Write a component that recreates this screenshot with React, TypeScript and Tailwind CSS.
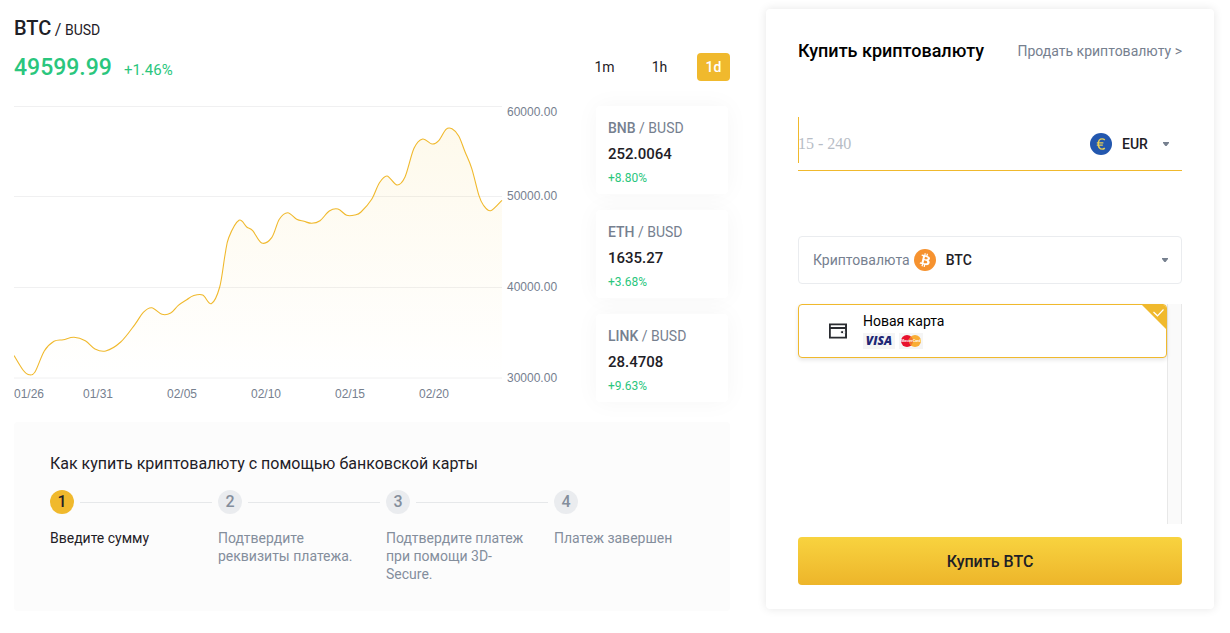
import React from "react";

type Point = [number, number];

const PRICES: Point[] = [
  [0, 249.5], [9, 264], [15, 268.7], [21, 266], [30.3, 245], [40, 235.3], [49.3, 233.7], [60, 231.3],
  [71.3, 234.7], [81, 243], [91.7, 245], [106.7, 236], [121, 218.3],
  [129.3, 206.3], [137.7, 201.7], [148, 208.3], [156.7, 207], [164.3, 199.3],
  [172.7, 193.7], [179.3, 189.7], [188.7, 189], [197.3, 197.7],
  [205.7, 181], [211, 149], [214.7, 131.7], [225, 114.3],
  [232.7, 121], [238.7, 124.7], [247.7, 137], [257.7, 131.7],
  [265.3, 113.3], [273.7, 106.7], [282.7, 113.3], [290, 115.3],
  [297.7, 117.3], [306, 114.7], [315.3, 105], [324, 103], [332.7, 109.3], [341, 109],
  [347, 106], [357.7, 93.3], [365.3, 77], [373, 70], [383, 79], [391, 71],
  [400, 42.3], [408.7, 33], [418, 38], [425, 34.3],
  [432, 23.3], [438, 22.8], [444.7, 30], [451, 45.7], [457.7, 62.3],
  [465, 89.7], [469.3, 99], [476.7, 104.7], [488, 94.3],
];

function smoothPath(points: Point[]): string {
  let d = `M${points[0][0]} ${points[0][1]}`;
  for (let i = 0; i < points.length - 1; i++) {
    const a = points[i - 1] ?? points[i];
    const b = points[i];
    const c = points[i + 1];
    const e = points[i + 2] ?? c;
    d += `C${b[0] + (c[0] - a[0]) / 6} ${b[1] + (c[1] - a[1]) / 6} ${c[0] - (e[0] - b[0]) / 6} ${
      c[1] - (e[1] - b[1]) / 6
    } ${c[0]} ${c[1]}`;
  }
  return d;
}

const LINE = smoothPath(PRICES);

const Y_TICKS = [
  { label: "60000.00", line: 0.5, text: 10 },
  { label: "50000.00", line: 90.5, text: 94 },
  { label: "40000.00", line: 181.5, text: 185 },
  { label: "30000.00", line: 272, text: 276 },
];

const X_TICKS = [
  { label: "01/26", x: 0 },
  { label: "01/31", x: 69 },
  { label: "02/05", x: 153 },
  { label: "02/10", x: 237 },
  { label: "02/15", x: 321 },
  { label: "02/20", x: 405 },
];

function PriceChart() {
  return (
    <svg viewBox="0 0 546 296" className="block h-auto w-full" role="img" aria-label="BTC / BUSD">
      <defs>
        <linearGradient id="area" x1="0" y1="0" x2="0" y2="1">
          <stop offset="0" stopColor="#f0b90b" stopOpacity="0.08" />
          <stop offset="1" stopColor="#f0b90b" stopOpacity="0" />
        </linearGradient>
      </defs>
      {Y_TICKS.map((t) => (
        <line key={t.label} x1="0" x2="488" y1={t.line} y2={t.line} stroke="#f0f0f1" />
      ))}
      <path d={`${LINE}L488 272L0 272Z`} fill="url(#area)" />
      <path d={LINE} fill="none" stroke="#f0b92d" strokeWidth="1.1" />
      <g className="fill-[#76808f] font-['Liberation_Sans',sans-serif] text-[12px]">
        {Y_TICKS.map((t) => (
          <text key={t.label} x="493" y={t.text}>{t.label}</text>
        ))}
        {X_TICKS.map((t) => (
          <text key={t.label} x={t.x} y="292">{t.label}</text>
        ))}
      </g>
    </svg>
  );
}

const PAIRS = [
  { base: "BNB", price: "252.0064", change: "+8.80%" },
  { base: "ETH", price: "1635.27", change: "+3.68%" },
  { base: "LINK", price: "28.4708", change: "+9.63%" },
];

function PairCard({ base, price, change }: { base: string; price: string; change: string }) {
  return (
    <article className="h-22 rounded bg-white px-3 pt-3 shadow-[0_0_24px_rgba(0,0,0,0.04)]">
      <h3 className="text-sm leading-5 text-[#76808f]">
        <span className="font-medium">{base}</span> / BUSD
      </h3>
      <p className="mt-1 text-[15px] leading-6 font-medium text-[#1e2026]">{price}</p>
      <p className="mt-1 text-xs leading-4 text-[#2ac67d]">{change}</p>
    </article>
  );
}

const STEPS = ["Введите сумму", "Подтвердите реквизиты платежа.", "Подтвердите платеж при помощи 3D-Secure.", "Платеж завершен"];

function Steps() {
  return (
    <section className="mt-5 min-h-[189px] rounded bg-[#fcfcfc] px-9 pt-7 text-[#1e2026]">
      <h2 className="pt-0.5 text-base leading-6">Как купить криптовалюту с помощью банковской карты</h2>
      <ol className="mt-3.5 grid grid-cols-[repeat(3,168px)_1fr]">
        {STEPS.map((text, i) => (
          <li key={text}>
            <div className="flex items-center gap-1.5 pr-1.5">
              <span
                className={
                  i === 0
                    ? "grid size-6 shrink-0 place-items-center rounded-full bg-[#f0b92d] text-base font-medium"
                    : "grid size-6 shrink-0 place-items-center rounded-full bg-[#eaecef] text-base font-medium text-[#848e9c]"
                }
              >
                {i + 1}
              </span>
              {i < 3 && <span className="h-px flex-1 bg-[#e6e8ea]" />}
            </div>
            <p className={i === 0 ? "mt-[15px] text-sm leading-[18px]" : "mt-[15px] w-[140px] text-sm leading-[18px] text-[#848e9c]"}>
              {text}
            </p>
          </li>
        ))}
      </ol>
    </section>
  );
}

function Caret() {
  return (
    <svg viewBox="0 0 6 4" className="h-1 w-1.5 fill-[#76808f]" aria-hidden="true">
      <path d="M0 0h6v1L3.6 4H2.4L0 1z" />
    </svg>
  );
}

function EuroIcon() {
  return (
    <svg viewBox="0 0 22 22" className="size-[22px] shrink-0" aria-hidden="true">
      <circle cx="11" cy="11" r="11" fill="#2357ae" />
      <path
        d="M14.8 6.9c-.8-.7-1.7-1-2.6-1-2.4 0-3.9 2.2-3.9 5.1s1.5 5.1 3.9 5.1c.9 0 1.8-.3 2.6-1M6.8 9.9h6.6M6.8 12.1h6"
        fill="none"
        stroke="#e9cf55"
        strokeWidth="1.4"
      />
    </svg>
  );
}

function BitcoinIcon() {
  return (
    <svg viewBox="0 0 32 32" className="size-[22px] shrink-0" aria-hidden="true">
      <circle cx="16" cy="16" r="16" fill="#f6922f" />
      <path
        fill="#fff"
        d="M23.2 14c.3-2.1-1.3-3.3-3.5-4l.7-2.9-1.7-.4-.7 2.8-1.4-.3.7-2.8-1.7-.5-.7 2.9-1.1-.3-2.4-.6-.5 1.9 1.3.3c.7.2.8.6.8 1l-2 8c-.1.2-.3.5-.8.4l-1.3-.3-.8 2 2.2.5 1.3.3-.8 2.9 1.8.5.7-2.9 1.3.4-.7 2.8 1.8.5.7-2.9c3 .5 5.2.3 6.1-2.4.8-2.2 0-3.4-1.5-4.2 1.1-.3 1.9-1 2.2-2.7zm-4 5.6c-.5 2.1-4.2 1-5.3.7l.9-3.8c1.2.3 5 .9 4.4 3.1zm.6-5.7c-.5 1.9-3.6 1-4.6.7l.9-3.4c1 .2 4.2.7 3.7 2.7z"
      />
    </svg>
  );
}

function WalletIcon() {
  return (
    <svg viewBox="0 0 18 16" className="h-4 w-[18px]" aria-hidden="true">
      <path d="M.9 1.4h16.2v13.2H.9zM1 5h16" fill="none" stroke="#2a2c31" strokeWidth="1.8" />
      <path d="M17 8.2h-4.600l-1 1 1 1H17" fill="#fff" stroke="#c3c5c9" strokeWidth=".6" />
      <path d="M12.200 8.300h1.800v1.800h-1.800z" fill="#1e2026" />
      <path d="M17.100 1v14" stroke="#2a2c31" strokeWidth="1.8" />
    </svg>
  );
}

function VisaMark() {
  return (
    <span className="grid h-4 w-8 place-items-center bg-[#f5f5f5] font-['Open_Sans','Noto_Sans',sans-serif] text-[12px] leading-4 font-extrabold text-[#1f2775] italic">
      VISA
    </span>
  );
}

function MastercardMark() {
  return (
    <svg viewBox="0 0 24 16" className="h-4 w-6" role="img" aria-label="MasterCard">
      <rect width="24" height="16" fill="#f5f5f5" />
      <circle cx="8" cy="8" r="6" fill="#e8112d" />
      <circle cx="16" cy="8" r="6" fill="#f9ad35" />
      <path d="M12 3.500a6 6 0 0 1 0 9a6 6 0 0 1 0-9z" fill="#f2762e" />
      <text x="12" y="9.4" textAnchor="middle" fontSize="3.500" fontWeight="700" fill="#fff" fontFamily="Liberation Sans, sans-serif">
        MasterCard
      </text>
    </svg>
  );
}

function BuyCard() {
  return (
    <form
      onSubmit={(e) => e.preventDefault()}
      className="flex min-h-[600px] w-[448px] shrink-0 flex-col rounded bg-white px-8 pt-[26px] pb-6 shadow-[0_0_10px_rgba(0,0,0,0.1)]"
    >
      <header className="flex h-8 items-center justify-between">
        <h2 className="text-lg font-medium text-black">Купить криптовалюту</h2>
        <a href="#sell" className="text-sm text-[#76808f]">Продать криптовалюту &gt;</a>
      </header>

      <div className="mt-[50px] flex h-[54px] items-start border-b border-[#f0b92d]">
        <input
          aria-label="Сумма"
          placeholder="15 - 240"
          className="h-[46px] min-w-0 flex-1 bg-[linear-gradient(#f0b92d,#f0b92d)] bg-[length:1px_100%] bg-no-repeat pt-2 font-['Liberation_Serif',serif] text-base outline-none placeholder:text-[#b7bdc6]"
        />
        <div className="mt-4 flex h-[22px] items-center pr-[13px]">
          <EuroIcon />
          <select
            aria-label="Валюта"
            className="ml-2.5 w-[41px] appearance-none bg-transparent text-sm font-medium text-[#1e2026] outline-none"
          >
            <option>EUR</option>
          </select>
          <Caret />
        </div>
      </div>

      <div className="mt-[65px] flex h-12 items-center rounded border border-[#eaecef] pr-[13px] pl-3.5">
        <label htmlFor="coin" className="text-sm text-[#76808f]">Криптовалюта</label>
        <span className="ml-1 flex"><BitcoinIcon /></span>
        <select
          id="coin"
          className="ml-2.5 flex-1 appearance-none bg-transparent text-sm font-medium text-[#1e2026] outline-none"
        >
          <option>BTC</option>
        </select>
        <Caret />
      </div>

      <div className="mt-5 flex h-[220px]">
        <div className="flex-1">
          <label className="relative flex h-[54px] items-center overflow-hidden rounded border border-[#f0b92d] bg-white pl-[30px] shadow-[0_2px_4px_rgba(0,0,0,0.1)]">
            <input type="radio" name="method" defaultChecked className="sr-only" />
            <WalletIcon />
            <span className="ml-4 flex flex-col gap-1">
              <span className="text-sm leading-4 text-black">Новая карта</span>
              <span className="flex gap-1">
                <VisaMark />
                <MastercardMark />
              </span>
            </span>
            <svg viewBox="0 0 24 24" className="absolute top-0 right-0 size-6" aria-hidden="true">
              <path d="M0 0h24v24z" fill="#f0b92d" />
              <path d="M11.500 7l4 3.800L21.500 4.500" fill="none" stroke="#fff" strokeWidth="1.2" />
            </svg>
          </label>
        </div>
        <div className="w-[15px] border-x border-[#e8e8e8] bg-[#fafafa]" />
      </div>

      <button
        type="submit"
        className="mt-[13px] h-12 rounded bg-linear-to-b from-[#f8d33f] to-[#edb52a] pt-0.5 text-base font-medium text-[#1e2026]"
      >
        Купить BTC
      </button>
    </form>
  );
}

export default function App() {
  return (
    <main className="flex items-start gap-9 bg-white pt-[9px] pr-4 pb-6 pl-3.5 font-[Roboto,'Noto_Sans',sans-serif]">
      <div className="min-w-0 flex-1">
        <h1 className="pt-[5px] text-sm leading-8 text-[#1e2026]">
          <span className="text-xl font-medium">BTC</span> <span className="text-base">/</span> BUSD
        </h1>
        <div className="mt-[7px] flex h-7 items-center justify-between">
          <p className="flex items-baseline gap-3 pt-0.5 text-[#2ac67d]">
            <span className="text-[23px] font-medium">49599.99</span>
            <span className="text-[15px]">+1.46%</span>
          </p>
          <div className="flex gap-5 text-sm text-[#1e2026]">
            <button type="button" className="h-7 w-[35px]">1m</button>
            <button type="button" className="h-7 w-[35px]">1h</button>
            <button type="button" className="h-7 w-[33px] rounded bg-[#f0b92d] font-medium text-white">1d</button>
          </div>
        </div>
        <div className="mt-[25px] flex gap-9 pr-0.5">
          <div className="min-w-0 flex-1">
            <PriceChart />
          </div>
          <div className="flex w-[132px] shrink-0 flex-col gap-4">
            {PAIRS.map((p) => (
              <PairCard key={p.base} {...p} />
            ))}
          </div>
        </div>
        <Steps />
      </div>
      <BuyCard />
    </main>
  );
}
